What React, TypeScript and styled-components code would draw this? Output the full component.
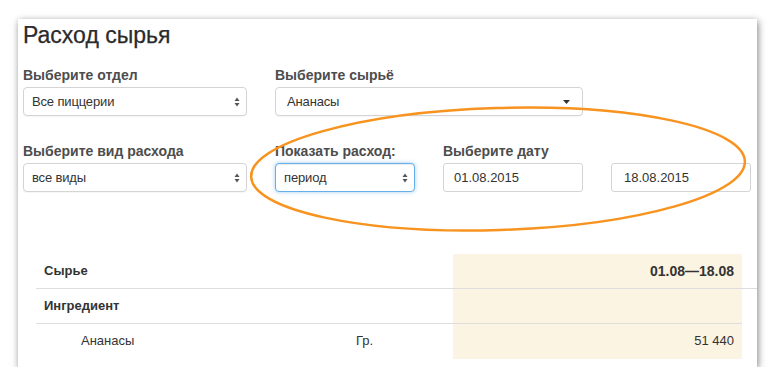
import styled, { createGlobalStyle } from 'styled-components';

const GlobalStyle = createGlobalStyle`
  html, body {
    margin: 0;
    background: #ffffff;
  }
  body {
    font-family: "Liberation Sans", Arial, sans-serif;
    color: #333;
  }
`;

type Row = {
  name: string;
  unit: string;
  value: string;
  kind: 'head' | 'group' | 'item';
};

const rows: Row[] = [
  { name: 'Сырье', unit: '', value: '01.08—18.08', kind: 'head' },
  { name: 'Ингредиент', unit: '', value: '', kind: 'group' },
  { name: 'Ананасы', unit: 'Гр.', value: '51 440', kind: 'item' },
];

function UpDownIcon() {
  return (
    <svg width="6" height="10" viewBox="0 0 6 10">
      <path d="M3 0.5 L5.5 4 H0.5 Z" fill="#555" />
      <path d="M3 9.5 L5.5 6 H0.5 Z" fill="#555" />
    </svg>
  );
}

function CaretIcon() {
  return (
    <svg width="7" height="4" viewBox="0 0 7 4">
      <path d="M0 0 H7 L3.5 4 Z" fill="#333" />
    </svg>
  );
}

export default function App() {
  return (
    <>
      <GlobalStyle />
      <Page>
        <Card>
          <Title>Расход сырья</Title>
          <FormGrid>
            <Field>
              <Label>Выберите отдел</Label>
              <SelectBox>
                <span>Все пиццерии</span>
                <UpDownIcon />
              </SelectBox>
            </Field>
            <Field $span={2}>
              <Label>Выберите сырьё</Label>
              <SelectBox $pad={11} $iconPad={12}>
                <span>Ананасы</span>
                <CaretIcon />
              </SelectBox>
            </Field>
            <Field $break>
              <Label>Выберите вид расхода</Label>
              <SelectBox>
                <span>все виды</span>
                <UpDownIcon />
              </SelectBox>
            </Field>
            <Field>
              <Label>Показать расход:</Label>
              <SelectBox $focused>
                <span>период</span>
                <UpDownIcon />
              </SelectBox>
            </Field>
            <Field>
              <Label>Выберите дату</Label>
              <DateInput readOnly defaultValue="01.08.2015" />
            </Field>
            <Field>
              <Label>&nbsp;</Label>
              <DateInput readOnly defaultValue="18.08.2015" $pad={12} />
            </Field>
          </FormGrid>

          <Table>
            <colgroup>
              <col style={{ width: 312 }} />
              <col style={{ width: 105 }} />
              <col style={{ width: 289 }} />
              <col style={{ width: 15 }} />
            </colgroup>
            <tbody>
              {rows.map((row, i) => (
                <tr key={i}>
                  <NameCell $kind={row.kind} $line={i < rows.length - 1}>
                    {row.name}
                  </NameCell>
                  <UnitCell $line={i < rows.length - 1}>{row.unit}</UnitCell>
                  <ValueCell $bold={row.kind === 'head'} $line={i < rows.length - 1}>
                    {row.value}
                  </ValueCell>
                  <EdgeCell $line={i === 0} />
                </tr>
              ))}
            </tbody>
          </Table>

          <Highlight width="520" height="140" viewBox="0 0 520 140">
            <ellipse
              cx="260"
              cy="70"
              rx="247"
              ry="61"
              fill="none"
              stroke="#f7931e"
              strokeWidth="2.5"
              transform="rotate(-1.8 260 70)"
            />
          </Highlight>
        </Card>
      </Page>
    </>
  );
}

const Page = styled.div`
  padding: 19px 0 0 18px;
`;

const Card = styled.div`
  position: relative;
  box-sizing: border-box;
  width: 739px;
  height: 348px;
  padding: 3px 0 10px 5px;
  background: #fff;
  box-shadow: 1px 2px 7px rgba(0, 0, 0, 0.5);
`;

const Title = styled.h1`
  margin: 0;
  font-size: 23px;
  line-height: 26px;
  font-weight: 400;
  color: #2b2b2b;
  -webkit-text-stroke: 0.25px #2b2b2b;
`;

const FormGrid = styled.div`
  display: grid;
  grid-template-columns: 224px 140px 140px 140px;
  column-gap: 28px;
  row-gap: 25px;
  margin-top: 17px;
`;

const Field = styled.div<{ $span?: number; $break?: boolean }>`
  display: flex;
  flex-direction: column;
  grid-column: ${(p) => (p.$break ? '1' : 'auto')} / span ${(p) => p.$span ?? 1};
`;

const Label = styled.label`
  font-size: 14px;
  line-height: 20px;
  font-weight: 700;
  color: #4d4d4d;
  margin-bottom: 2px;
`;

const SelectBox = styled.div<{ $focused?: boolean; $pad?: number; $iconPad?: number }>`
  box-sizing: border-box;
  height: 29px;
  display: flex;
  align-items: center;
  justify-content: space-between;
  padding: 0 ${(p) => p.$iconPad ?? 6}px 0 ${(p) => p.$pad ?? 8}px;
  font-size: 13px;
  letter-spacing: -0.15px;
  color: #333;
  background: #fff;
  border: 1px solid ${(p) => (p.$focused ? '#66afe9' : '#d4d4d4')};
  border-radius: 4px;
  box-shadow: ${(p) =>
    p.$focused
      ? 'inset 0 1px 1px rgba(0,0,0,.075), 0 0 4px rgba(102,175,233,.6)'
      : '0 1px 1px rgba(0,0,0,.04)'};

  svg {
    flex: none;
  }
`;

const DateInput = styled.input<{ $pad?: number }>`
  box-sizing: border-box;
  width: 100%;
  height: 29px;
  margin: 0;
  padding: 0 8px 0 ${(p) => p.$pad ?? 10}px;
  font-family: "Liberation Sans", Arial, sans-serif;
  font-size: 13px;
  color: #333;
  background: #fff;
  border: 1px solid #d4d4d4;
  border-radius: 3px;
  outline: none;
`;

const Table = styled.table`
  table-layout: fixed;
  width: 721px;
  margin: 62px 0 0 13px;
  border-collapse: collapse;
  font-size: 13px;
  color: #333;
`;

const Cell = styled.td<{ $line?: boolean }>`
  height: 34px;
  padding: 0 8px;
  line-height: 20px;
  border-bottom: 1px solid ${(p) => (p.$line ? '#dddddd' : 'transparent')};
  white-space: nowrap;
`;

const NameCell = styled(Cell)<{ $kind: Row['kind'] }>`
  font-weight: ${(p) => (p.$kind === 'item' ? 400 : 700)};
  padding-left: ${(p) => (p.$kind === 'item' ? 45 : 8)}px;
`;

const UnitCell = styled(Cell)``;

const ValueCell = styled(Cell)<{ $bold?: boolean }>`
  text-align: right;
  background: #fbf4e2;
  font-weight: ${(p) => (p.$bold ? 700 : 400)};
  font-size: ${(p) => (p.$bold ? 14 : 13)}px;
`;

const EdgeCell = styled(Cell)`
  padding: 0;
`;

const Highlight = styled.svg`
  position: absolute;
  left: 220px;
  top: 80px;
  pointer-events: none;
`;
